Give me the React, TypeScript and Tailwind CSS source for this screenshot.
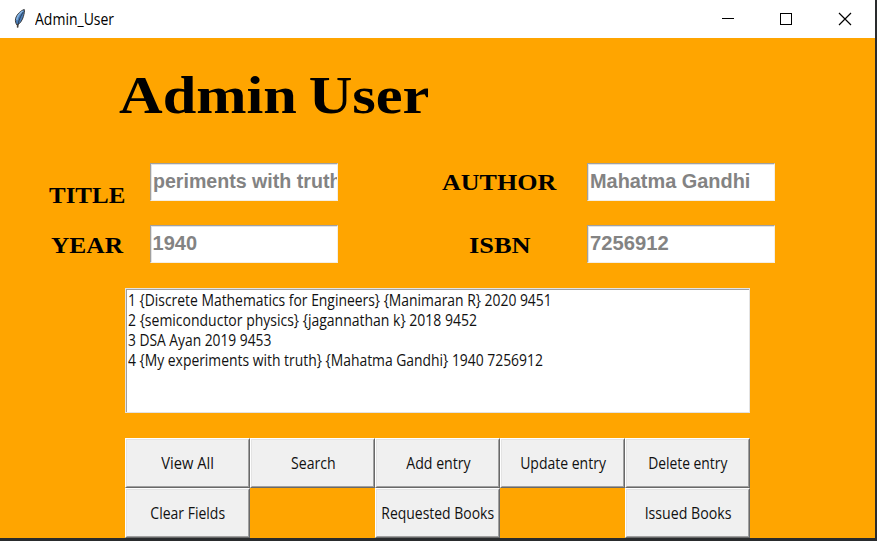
const ROWS = [
  { text: "1 {Discrete Mathematics for Engineers} {Manimaran R} 2020 9451", fit: "scale-x-[0.868]" },
  { text: "2 {semiconductor physics} {jagannathan k} 2018 9452", fit: "scale-x-[0.874]" },
  { text: "3 DSA Ayan 2019 9453", fit: "scale-x-[0.862]" },
  { text: "4 {My experiments with truth} {Mahatma Gandhi} 1940 7256912", fit: "scale-x-[0.868]" },
];

const BUTTONS = [
  { label: "View All", fit: "scale-x-[0.92]" },
  { label: "Search", fit: "scale-x-[0.88]" },
  { label: "Add entry", fit: "scale-x-[0.885]" },
  { label: "Update entry", fit: "scale-x-[0.875]" },
  { label: "Delete entry", fit: "scale-x-[0.865]" },
  { label: "Clear Fields", fit: "scale-x-[0.875]" },
  null,
  { label: "Requested Books", fit: "scale-x-[0.872]" },
  null,
  { label: "Issued Books", fit: "scale-x-[0.885]" },
];

function Feather() {
  return (
    <svg width="16" height="22" viewBox="0 0 16 22" className="-mt-px shrink-0">
      <path d="M11.3 1.5C8 2.4 4 6 2.6 10.5C2 13 2.8 15.5 4 17C7 16 9.4 12 10.4 8.5C11.2 5.5 11.8 3 11.3 1.5Z" fill="#4a7db8" stroke="#3a3a3a" strokeWidth="1" />
      <path d="M9.8 3.2C7 5 4.4 8.5 3.8 12" fill="none" stroke="#86b3e0" strokeWidth="1.6" />
      <path d="M10.2 4C8 7.5 5.4 12 4.6 19.5" fill="none" stroke="#1e2a3a" strokeWidth="0.8" />
      <path d="M4.6 16V19.5" stroke="#44403c" strokeWidth="1.5" />
    </svg>
  );
}

function Entry({ value, fit = "" }: { value: string; fit?: string }) {
  return (
    <div className="h-[38px] w-[188px] shrink-0 border border-t-[#a0a0a0] border-l-[#a0a0a0] border-r-[#f4efe5] border-b-[#f4efe5] bg-white">
      <div className="h-full overflow-hidden border-t border-l border-[#e3e3e3] pl-[0.6px] font-['Liberation_Sans',sans-serif] text-[20px] leading-[33px] font-bold whitespace-pre text-[#838383]">
        <span className={`inline-block origin-left ${fit}`}>{value}</span>
      </div>
    </div>
  );
}

function TkButton({ label, fit }: { label: string; fit: string }) {
  return (
    <button className="h-[50px] w-[125px] border border-t-white border-l-white border-r-[#696969] border-b-[#696969] bg-[#f0f0f0]">
      <span className="flex h-full items-center justify-center border border-t-[#e3e3e3] border-l-[#e3e3e3] border-r-[#a0a0a0] border-b-[#a0a0a0] pl-px whitespace-nowrap">
        <span className={`inline-block ${fit}`}>{label}</span>
      </span>
    </button>
  );
}

export default function App() {
  return (
    <div className="h-[541px] w-[877px] overflow-hidden bg-[#292b2d] font-['Open_Sans','Noto_Sans',sans-serif] text-[16px] text-[#111]">
      <div className="flex h-[538px] w-[875px] flex-col bg-[#ffa500]">
        <header className="flex h-[38px] shrink-0 items-center bg-white pl-[13px] text-black">
          <Feather />
          <span className="-mt-px ml-[6px] origin-left scale-x-[0.875] leading-[20px]">Admin_User</span>
          <svg width="130" height="14" viewBox="0 0 130 14" className="mr-[23px] ml-auto" fill="none" stroke="#000" shapeRendering="crispEdges">
            <path d="M0 6.5H12" />
            <rect x="58.5" y="1.5" width="11" height="11" />
            <path d="M117 1L129 13M129 1L117 13" strokeWidth="1.2" shapeRendering="auto" />
          </svg>
        </header>

        <h1 className="mt-[26px] ml-[119px] h-[62px] w-fit origin-left scale-x-[1.14] font-['Liberation_Serif',serif] text-[53px] leading-[62px] font-bold whitespace-nowrap text-black [word-spacing:-3px]">
          Admin User
        </h1>

        <main className="mt-[37px] font-['Liberation_Serif',serif] text-[24px] leading-[38px] font-bold text-black">
          <div className="flex h-[38px]">
            <div className="w-[150px] pt-[13px] pl-[49px]"><span className="inline-block origin-left scale-x-[1.04]">TITLE</span></div>
            <Entry value="periments with truth" fit="scale-x-[0.98]" />
            <div className="w-[249px] pl-[104px]"><span className="inline-block origin-left scale-x-[1.085]">AUTHOR</span></div>
            <Entry value="Mahatma Gandhi" fit="scale-x-[0.995]" />
          </div>
          <div className="mt-[24px] flex h-[38px]">
            <div className="w-[150px] pt-px pl-[51px]"><span className="inline-block origin-left scale-x-[1.06]">YEAR</span></div>
            <Entry value="1940" />
            <div className="w-[249px] pt-px pl-[131px]"><span className="inline-block origin-left scale-x-[1.1]">ISBN</span></div>
            <Entry value="7256912" fit="scale-x-[1.01]" />
          </div>
        </main>

        <div className="mt-[25px] ml-[125px] h-[125px] w-[625px] shrink-0 border border-[#e3e3e3] bg-white">
          <div className="h-full border-t border-l border-[#a0a0a0] pl-[0.5px] leading-[21px]">
            {ROWS.map((row) => (
              <div key={row.text} className="h-[20px] whitespace-nowrap">
                <span className={`inline-block origin-left ${row.fit}`}>{row.text}</span>
              </div>
            ))}
          </div>
        </div>

        <div className="mt-[25px] ml-[125px] grid w-[625px] grid-cols-5">
          {BUTTONS.map((b, i) => (b ? <TkButton key={i} label={b.label} fit={b.fit} /> : <div key={i} />))}
        </div>
      </div>
    </div>
  );
}
